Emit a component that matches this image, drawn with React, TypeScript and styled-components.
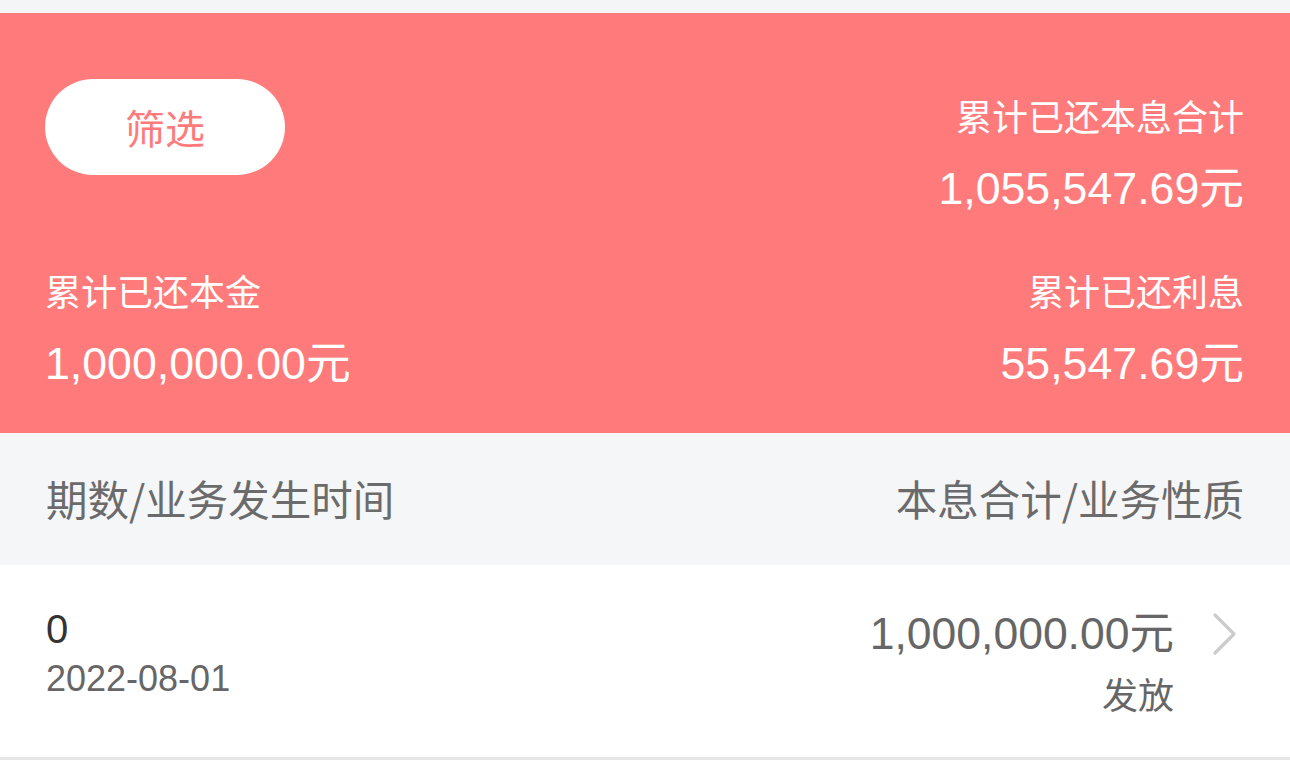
import React from "react";
import styled, { createGlobalStyle } from "styled-components";

const Global = createGlobalStyle`
  html, body { margin: 0; padding: 0; background: #f4f5f7; }
  body { font-family: "Liberation Sans", "Noto Sans CJK SC", sans-serif; }
  * { box-sizing: border-box; }
`;

const Page = styled.div`
  width: 1290px;
  padding-top: 13px;
  background: #f4f5f7;
`;

const Summary = styled.section`
  background: #ff7b7b;
  height: 420px;
  padding: 66px 46px 0 45px;
  display: flex;
  flex-direction: column;
  color: #fff;
`;

const SummaryRow = styled.div<{ $top?: number }>`
  display: flex;
  justify-content: space-between;
  align-items: flex-start;
  margin-top: ${(p) => p.$top ?? 0}px;
`;

const FilterButton = styled.button`
  width: 240px;
  height: 96px;
  border: none;
  border-radius: 48px;
  background: #fff;
  color: #ff7b7b;
  font-family: "Noto Sans CJK SC", sans-serif;
  font-size: 40px;
  padding: 0;
  cursor: pointer;
`;

const Stat = styled.div<{ $align: "left" | "right"; $top?: number }>`
  display: flex;
  flex-direction: column;
  align-items: ${(p) => (p.$align === "right" ? "flex-end" : "flex-start")};
  gap: 24px;
  margin-top: ${(p) => p.$top ?? 0}px;
`;

const StatLabel = styled.div`
  font-family: "Noto Sans CJK SC", sans-serif;
  font-size: 36px;
  line-height: 50px;
  white-space: nowrap;
`;

const StatValue = styled.div`
  font-family: "Liberation Sans", "Noto Sans CJK SC", sans-serif;
  font-size: 44.7px;
  line-height: 50px;
  white-space: nowrap;
`;

const TableHeader = styled.div`
  height: 132px;
  padding: 0 46px 2px 46px;
  display: flex;
  align-items: center;
  justify-content: space-between;
  font-family: "Noto Sans CJK SC", sans-serif;
  font-size: 41.5px;
  color: #6b6b6b;
  background: #f5f6f8;
`;

const Record = styled.div`
  height: 195px;
  background: #fff;
  border-bottom: 3px solid #e6e6e6;
  padding: 40px 52px 0 46px;
  display: flex;
  justify-content: space-between;
  align-items: flex-start;
`;

const RecordLeft = styled.div`
  display: flex;
  flex-direction: column;
  gap: 4px;
`;

const Period = styled.div`
  font-size: 40px;
  line-height: 48px;
  color: #333;
`;

const DateText = styled.div`
  font-size: 36px;
  line-height: 44px;
  color: #666;
`;

const RecordRight = styled.div`
  display: flex;
  align-items: flex-start;
  gap: 38px;
  margin-top: 5px;
`;

const RecordValues = styled.div`
  display: flex;
  flex-direction: column;
  align-items: flex-end;
  gap: 13px;
`;

const Amount = styled.div`
  font-size: 44.5px;
  line-height: 48px;
  color: #666;
  white-space: nowrap;
`;

const Nature = styled.div`
  font-family: "Noto Sans CJK SC", sans-serif;
  font-size: 36px;
  line-height: 44px;
  color: #666;
`;

const Chevron = styled.svg`
  width: 26px;
  height: 44px;
  margin-top: 2px;
`;

export default function App() {
  return (
    <Page>
      <Global />
      <Summary>
        <SummaryRow>
          <FilterButton>筛选</FilterButton>
          <Stat $align="right" $top={11}>
            <StatLabel>累计已还本息合计</StatLabel>
            <StatValue>1,055,547.69元</StatValue>
          </Stat>
        </SummaryRow>
        <SummaryRow $top={51}>
          <Stat $align="left">
            <StatLabel>累计已还本金</StatLabel>
            <StatValue>1,000,000.00元</StatValue>
          </Stat>
          <Stat $align="right">
            <StatLabel>累计已还利息</StatLabel>
            <StatValue>55,547.69元</StatValue>
          </Stat>
        </SummaryRow>
      </Summary>
      <TableHeader>
        <span>期数/业务发生时间</span>
        <span>本息合计/业务性质</span>
      </TableHeader>
      <Record>
        <RecordLeft>
          <Period>0</Period>
          <DateText>2022-08-01</DateText>
        </RecordLeft>
        <RecordRight>
          <RecordValues>
            <Amount>1,000,000.00元</Amount>
            <Nature>发放</Nature>
          </RecordValues>
          <Chevron viewBox="0 0 26 44" fill="none">
            <path d="M3 3 L22 22 L3 41" stroke="#cccccc" strokeWidth="3.2" strokeLinecap="round" strokeLinejoin="round" />
          </Chevron>
        </RecordRight>
      </Record>
    </Page>
  );
}
